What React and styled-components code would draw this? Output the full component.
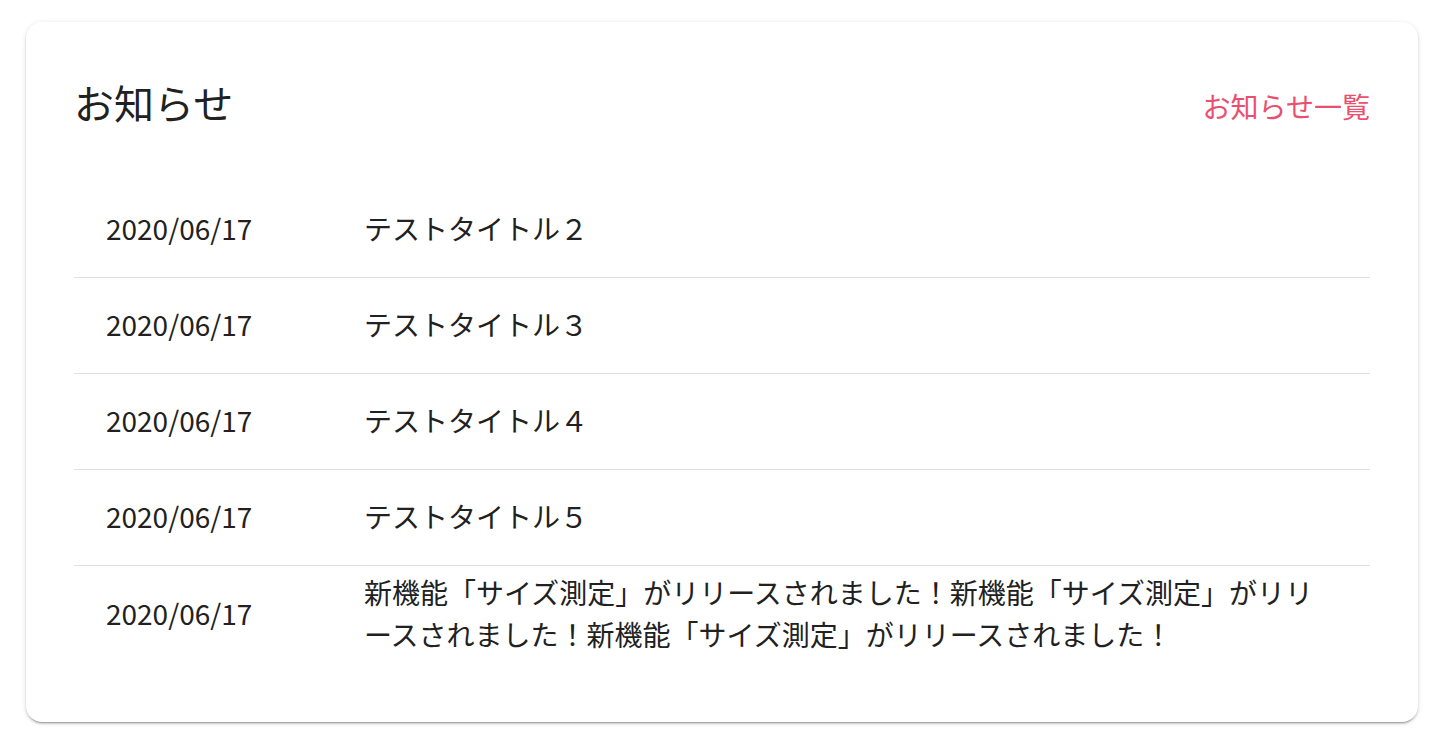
import React from 'react';
import styled, { createGlobalStyle } from 'styled-components';

const GlobalStyle = createGlobalStyle`
	* { box-sizing: border-box; }
	body {
		margin: 0;
		background: #ffffff;
		font-family: "Noto Sans CJK JP", "Noto Sans", sans-serif;
		color: #212121;
	}
`;

const Page = styled.main`
	padding: 22px 20px 24px 26px;
`;

const Card = styled.section`
	background: #ffffff;
	border-radius: 16px;
	box-shadow: 0 3px 1px -2px rgba(0, 0, 0, 0.2), 0 2px 2px 0 rgba(0, 0, 0, 0.14), 0 1px 5px 0 rgba(0, 0, 0, 0.12);
	padding: 52px 48px 60px 48px;
`;

const Header = styled.header`
	display: flex;
	align-items: center;
	justify-content: space-between;
	margin-bottom: 52px;
`;

const Title = styled.h2`
	margin: 0;
	font-size: 40px;
	font-weight: 400;
	line-height: 56px;
	color: #212121;
`;

const MoreLink = styled.a`
	font-size: 28px;
	line-height: 42px;
	color: #e95070;
	text-decoration: none;
	margin-top: 8px;
`;

const List = styled.ul`
	list-style: none;
	margin: 0;
	padding: 0;
`;

const Row = styled.li`
	display: flex;
	align-items: center;
	height: 96px;
	padding-bottom: 3px;
	font-size: 28px;
	line-height: 42px;

	&:not(:last-child){
		border-bottom: 1px solid #e0e0e0;
	}
`;

const DateCell = styled.span`
	flex: 0 0 292px;
	padding-left: 32px;
	color: #212121;
`;

const TitleCell = styled.span`
	flex: 1;
	padding-right: 32px;
	margin-left: -2px;
	color: #212121;
`;

const news = [
	{ date: '2020/06/17', title: 'テストタイトル２' },
	{ date: '2020/06/17', title: 'テストタイトル３' },
	{ date: '2020/06/17', title: 'テストタイトル４' },
	{ date: '2020/06/17', title: 'テストタイトル５' },
	{ date: '2020/06/17', title: '新機能「サイズ測定」がリリースされました！新機能「サイズ測定」がリリースされました！新機能「サイズ測定」がリリースされました！' },
];

const App = () => {
	return (
		<Page>
			<GlobalStyle />
			<Card>
				<Header>
					<Title>お知らせ</Title>
					<MoreLink href="#">お知らせ一覧</MoreLink>
				</Header>
				<List>
					{news.map((item, i) => (
						<Row key={i}>
							<DateCell>{item.date}</DateCell>
							<TitleCell>{item.title}</TitleCell>
						</Row>
					))}
				</List>
			</Card>
		</Page>
	);
};

export default App;
